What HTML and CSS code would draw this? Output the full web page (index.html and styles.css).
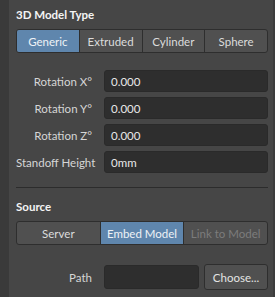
FILE: index.html
```html
<!DOCTYPE html>
<html>
<head>
<meta charset="utf-8">
<link rel="stylesheet" href="styles.css">
</head>
<body>
<div class="frame">
  <div class="gutter"></div>
  <div class="panel">
    <div class="title t1">3D Model Type</div>
    <div class="seg seg4">
      <div class="segbtn active">Generic</div>
      <div class="segbtn">Extruded</div>
      <div class="segbtn">Cylinder</div>
      <div class="segbtn">Sphere</div>
    </div>
    <div class="rows">
      <div class="row"><div class="label">Rotation X°</div><div class="input">0.000</div></div>
      <div class="row"><div class="label">Rotation Y°</div><div class="input">0.000</div></div>
      <div class="row"><div class="label">Rotation Z°</div><div class="input">0.000</div></div>
      <div class="row"><div class="label">Standoff Height</div><div class="input">0mm</div></div>
    </div>
    <div class="divider"></div>
    <div class="title t2">Source</div>
    <div class="seg seg3">
      <div class="segbtn">Server</div>
      <div class="segbtn active">Embed Model</div>
      <div class="segbtn disabled">Link to Model</div>
    </div>
    <div class="row pathrow">
      <div class="label">Path</div>
      <div class="input short"></div>
      <div class="btn">Choose...</div>
    </div>
  </div>
  <div class="edge"></div>
</div>
</body>
</html>
```
FILE: styles.css
```css
html, body {
  margin: 0;
  padding: 0;
  background: #464646;
}
.frame {
  display: flex;
  width: 275px;
  height: 297px;
  font-family: "Lato", "Noto Sans", sans-serif;
  font-size: 11.5px;
  color: #dadada;
}
.gutter {
  width: 9px;
  background: #3a3a3a;
  flex: none;
}
.edge {
  width: 2px;
  background: #3c3c3c;
  flex: none;
}
.panel {
  flex: 1;
  padding: 0 5px 0 7px;
  display: flex;
  flex-direction: column;
}
.title {
  font-weight: bold;
  color: #f4f4f4;
  height: 16px;
  line-height: 16px;
}
.t1 { margin-top: 7px; }
.t2 { margin-top: 11px; }
.seg {
  display: flex;
  height: 24px;
  box-sizing: border-box;
  border: 1px solid #2e2e2e;
  border-radius: 3px;
  background: #505050;
  overflow: hidden;
  margin-top: 6px;
}
.segbtn {
  flex: 1;
  display: flex;
  align-items: center;
  justify-content: center;
  border-left: 1px solid #2e2e2e;
  color: #dcdcdc;
}
.segbtn:first-child { border-left: none; }
.segbtn.active {
  background: #5f86ad;
  color: #eef2f6;
}
.segbtn.disabled { color: #7c7c7c; }
.rows {
  display: flex;
  flex-direction: column;
  gap: 5px;
  margin-top: 17px;
}
.row {
  display: flex;
  align-items: center;
  height: 22px;
}
.label {
  width: 88px;
  flex: none;
  box-sizing: border-box;
  text-align: right;
  padding-right: 12px;
  white-space: nowrap;
  color: #d6d6d6;
}
.input {
  flex: 1;
  height: 22px;
  box-sizing: border-box;
  background: #2e2e2e;
  border: 1px solid #2a2a2a;
  border-radius: 3px;
  padding-left: 6px;
  display: flex;
  align-items: center;
  color: #e8e8e8;
}
.divider {
  height: 1px;
  background: #2c2c2c;
  margin-top: 14px;
}
.pathrow {
  margin-top: 19px;
  height: 26px;
}
.input.short {
  flex: none;
  width: 95px;
  height: 24px;
}
.btn {
  margin-left: 5px;
  flex: 1;
  height: 26px;
  box-sizing: border-box;
  border: 1px solid #2e2e2e;
  border-radius: 3px;
  background: #505050;
  display: flex;
  align-items: center;
  justify-content: center;
  color: #e4e4e4;
}
```
